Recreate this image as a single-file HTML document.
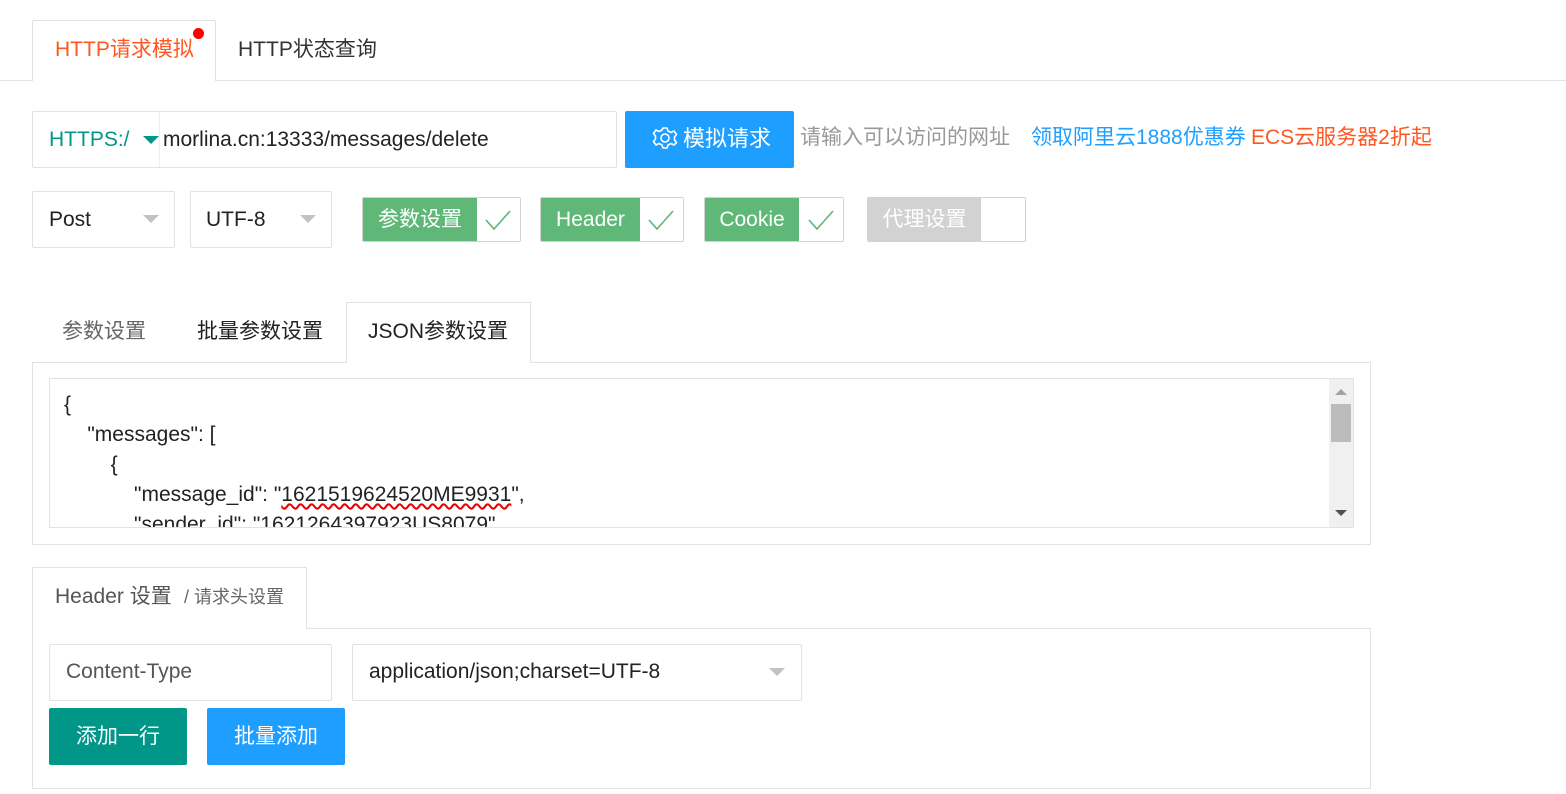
<!DOCTYPE html>
<html><head><meta charset="utf-8"><style>
*{box-sizing:border-box;margin:0;padding:0}
body{width:1566px;height:794px;background:#fff;position:relative;overflow:hidden;font-family:"Liberation Sans","Noto Sans CJK SC",sans-serif;font-size:21px;color:#333}
.a{position:absolute}
.t{position:absolute;white-space:nowrap;line-height:1}
.box{position:absolute;border:1px solid #e2e2e2;background:#fff;border-radius:2px}
.tri{position:absolute;width:0;height:0;border-left:8px solid transparent;border-right:8px solid transparent;border-top:8px solid #c2c2c2}
.chk{position:absolute;border:1px solid #d2d2d2;border-radius:2px;background:#fff;overflow:hidden}
.chk .g{position:absolute;left:0;top:0;bottom:0;color:#fff;text-align:center;line-height:44px;font-size:21px}
.btn{position:absolute;color:#fff;text-align:center;border-radius:2px;font-size:21px}
</style></head><body>
<div class="a" style="left:0;top:80px;width:1566px;height:1px;background:#e2e2e2"></div>
<div class="a" style="left:32px;top:20px;width:184px;height:61px;border:1px solid #e2e2e2;border-bottom:none;background:#fff;border-radius:2px 2px 0 0"></div>
<div class="t" style="left:55px;top:39px;color:#ff5722">HTTP请求模拟</div>
<div class="a" style="left:193px;top:28px;width:11px;height:11px;border-radius:50%;background:#f00"></div>
<div class="t" style="left:238px;top:39px;color:#333">HTTP状态查询</div>
<div class="box" style="left:32px;top:111px;width:585px;height:57px"></div>
<div class="a" style="left:159px;top:112px;width:1px;height:55px;background:#eee"></div>
<div class="t" style="left:49px;top:129px;color:#009688">HTTPS:/</div>
<div class="a" style="left:143px;top:136px;width:0;height:0;border-left:8px solid transparent;border-right:8px solid transparent;border-top:8px solid #009688"></div>
<div class="t" style="left:163px;top:129px;color:#222">morlina.cn:13333/messages/delete</div>
<div class="btn" style="left:625px;top:111px;width:169px;height:57px;background:#1e9fff"></div>
<svg class="a" style="left:652px;top:126px" width="26" height="26" viewBox="0 0 26 26"><path d="M11 2h4l1 3 3 1.5 3-1.5 2.5 3.5-2 2.5v3l2 2.5L22 19l-3-1.5-3 1.5-1 3h-4l-1-3-3-1.5L4 19l-2.5-3.5 2-2.5v-3l-2-2.5L4 4l3 1.5L10 4z" fill="none" stroke="#fff" stroke-width="1.6" stroke-linejoin="round"/><circle cx="13" cy="12" r="4" fill="none" stroke="#fff" stroke-width="1.6"/></svg>
<div class="t" style="left:683px;top:128px;color:#fff;font-size:22px">模拟请求</div>
<div class="t" style="left:800px;top:127px;color:#999">请输入可以访问的网址</div>
<div class="t" style="left:1031px;top:127px;color:#1e9fff">领取阿里云1888优惠券</div>
<div class="t" style="left:1251px;top:127px;color:#ff5722">ECS云服务器2折起</div>
<div class="box" style="left:32px;top:191px;width:143px;height:57px"></div>
<div class="t" style="left:49px;top:209px;color:#222">Post</div>
<div class="tri" style="left:143px;top:215px"></div>
<div class="box" style="left:190px;top:191px;width:142px;height:57px"></div>
<div class="t" style="left:206px;top:209px;color:#222">UTF-8</div>
<div class="tri" style="left:300px;top:215px"></div>
<div class="chk" style="left:362px;top:197px;width:159px;height:45px"><div class="g" style="width:114px;background:#5fb878">参数设置</div></div>
<div class="chk" style="left:540px;top:197px;width:144px;height:45px"><div class="g" style="width:99px;background:#5fb878">Header</div></div>
<div class="chk" style="left:704px;top:197px;width:140px;height:45px"><div class="g" style="width:94px;background:#5fb878">Cookie</div></div>
<div class="chk" style="left:867px;top:197px;width:159px;height:45px"><div class="g" style="width:113px;background:#d2d2d2">代理设置</div></div>
<svg class="a" style="left:484px;top:208px" width="28" height="24"><path d="M2 12l8 9L26 3" fill="none" stroke="#5fb878" stroke-width="1.6"/></svg>
<svg class="a" style="left:647px;top:208px" width="28" height="24"><path d="M2 12l8 9L26 3" fill="none" stroke="#5fb878" stroke-width="1.6"/></svg>
<svg class="a" style="left:807px;top:208px" width="28" height="24"><path d="M2 12l8 9L26 3" fill="none" stroke="#5fb878" stroke-width="1.6"/></svg>
<div class="a" style="left:32px;top:362px;width:1339px;height:183px;border:1px solid #e2e2e2"></div>
<div class="a" style="left:346px;top:302px;width:185px;height:61px;border:1px solid #e2e2e2;border-bottom:none;background:#fff"></div>
<div class="t" style="left:62px;top:321px;color:#666">参数设置</div>
<div class="t" style="left:197px;top:321px;color:#222">批量参数设置</div>
<div class="t" style="left:368px;top:321px;color:#222">JSON参数设置</div>
<div class="a" style="left:49px;top:378px;width:1305px;height:150px;border:1px solid #e2e2e2;overflow:hidden;background:#fff">
<pre style="position:absolute;left:14px;top:11px;font-family:'Liberation Sans',sans-serif;font-size:21px;line-height:30px;color:#222">{
    "messages": [
        {
            "message_id": "<span style="text-decoration:underline wavy #e00">1621519624520ME9931</span>",
            "sender_id": "1621264397923US8079",</pre>
<div class="a" style="left:1279px;top:0;width:24px;height:148px;background:#f0f0f0"></div>
<div class="a" style="left:1281px;top:25px;width:20px;height:38px;background:#bcbcbc"></div>
<div class="a" style="left:1285px;top:10px;border-left:6px solid transparent;border-right:6px solid transparent;border-bottom:6px solid #a3a3a3"></div>
<div class="a" style="left:1285px;top:131px;border-left:6px solid transparent;border-right:6px solid transparent;border-top:6px solid #505050"></div>
</div>
<div class="a" style="left:32px;top:628px;width:1339px;height:161px;border:1px solid #e2e2e2"></div>
<div class="a" style="left:32px;top:567px;width:275px;height:62px;border:1px solid #e2e2e2;border-bottom:none;background:#fff"></div>
<div class="t" style="left:55px;top:586px;color:#555">Header 设置</div>
<div class="t" style="left:184px;top:588px;color:#666;font-size:18px">/ 请求头设置</div>
<div class="box" style="left:49px;top:644px;width:283px;height:57px"></div>
<div class="t" style="left:66px;top:661px;color:#555">Content-Type</div>
<div class="box" style="left:352px;top:644px;width:450px;height:57px"></div>
<div class="t" style="left:369px;top:661px;color:#222">application/json;charset=UTF-8</div>
<div class="tri" style="left:769px;top:668px"></div>
<div class="btn" style="left:49px;top:708px;width:138px;height:57px;background:#009688;line-height:57px">添加一行</div>
<div class="btn" style="left:207px;top:708px;width:138px;height:57px;background:#1e9fff;line-height:57px">批量添加</div>
</body></html>
